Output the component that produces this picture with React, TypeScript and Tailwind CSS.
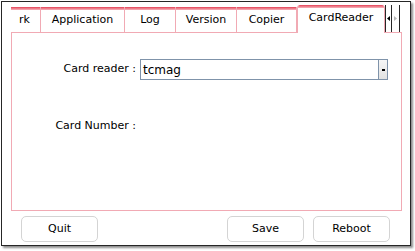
const tabs = [
  { label: "rk", w: "w-[30px]", clip: true },
  { label: "Application", w: "w-[84px]" },
  { label: "Log", w: "w-[51px]" },
  { label: "Version", w: "w-[61px]" },
  { label: "Copier", w: "w-[60px]" },
];

const Tab = ({ label, w, clip }: { label: string; w: string; clip?: boolean }) => (
  <div className={`${w} h-[25px] flex flex-col border-r border-[#f1aab4] overflow-hidden`}>
    <div className="h-[3px] bg-linear-to-b from-[#e23a57] to-[#f5b4be]" />
    <div className={`flex-1 flex items-center pb-[2px] ${clip ? "justify-end pr-[10px]" : "justify-center"}`}>
      <span className="whitespace-nowrap">{label}</span>
    </div>
  </div>
);

const Boton = ({ label }: { label: string }) => (
  <button className="w-[77px] h-[26px] rounded-[5px] border border-[#d4d4d4] bg-white text-[11px] text-black">
    {label}
  </button>
);

export default function App() {
  return (
    <div className="w-[415px] h-[251px] bg-white pl-px pt-px font-['DejaVu_Sans',sans-serif] text-[11px] text-black">
      <div className="w-[410px] h-[245px] border border-[#262626] bg-white shadow-[2px_2px_2px_rgba(0,0,0,0.45)] flex flex-col">
        <div className="ml-[9px] mt-[3px] w-[391px]">
          {/* barra de pestañas */}
          <div className="flex items-end h-[27px]">
            {tabs.map((t) => (
              <Tab key={t.label} {...t} />
            ))}
            <div className="w-[88px] h-[28px] -mb-px relative z-10 bg-white flex flex-col rounded-t-[3px] overflow-hidden border-x border-[#f1aab4]">
              <div className="h-[3px] bg-linear-to-b from-[#e23a57] to-[#f5b4be]" />
              <div className="flex-1 flex items-center justify-center pb-[4px]">
                <span>CardReader</span>
              </div>
            </div>
            <div className="h-[27px] w-[15px] flex border-x border-[#262626] bg-white">
              <div className="w-[6px] flex items-center justify-center border-r border-[#262626]">
                <svg width="3" height="5" viewBox="0 0 3 5">
                  <path d="M3 0 L0 2.5 L3 5 Z" fill="#000" />
                </svg>
              </div>
              <div className="w-[6px] flex items-center justify-center">
                <svg width="3" height="5" viewBox="0 0 3 5">
                  <path d="M0 0 L3 2.5 L0 5 Z" fill="#b8b8b8" />
                </svg>
              </div>
            </div>
          </div>
          {/* panel */}
          <div className="h-[179px] border border-[#f1aab4] bg-white">
            <div className="mt-[26px] flex items-center gap-[4px]">
              <div className="w-[124px] text-right">Card reader :</div>
              <div className="w-[248px] h-[21px] flex border border-[#7f93aa]">
                <div className="flex-1 flex items-center pl-[2px] text-[12px]">tcmag</div>
                <div className="w-[9px] flex items-center justify-center border-l border-[#7f93aa] bg-linear-to-b from-[#f6f6f6] to-[#e2e2e2]">
                  <div className="w-[3px] h-[2px] bg-black" />
                </div>
              </div>
            </div>
            <div className="mt-[36px] h-[21px] flex items-center gap-[4px]">
              <div className="w-[124px] text-right">Card Number :</div>
            </div>
          </div>
        </div>
        <div className="flex mt-[5px] pl-[19px]">
          <Boton label="Quit" />
          <div className="ml-[129px] flex gap-[9px]">
            <Boton label="Save" />
            <Boton label="Reboot" />
          </div>
        </div>
      </div>
    </div>
  );
}
